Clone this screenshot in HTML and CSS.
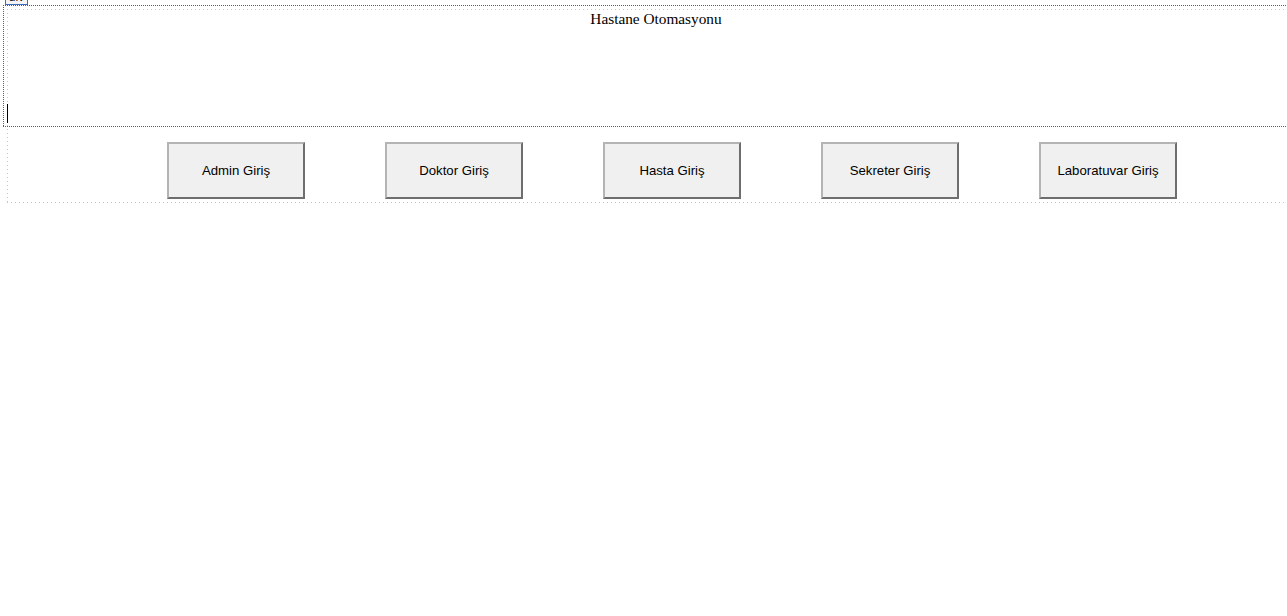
FILE: index.html
```html
<!DOCTYPE html>
<html>
<head>
<meta charset="utf-8">
<link rel="stylesheet" href="styles.css">
</head>
<body>
<div class="design">
  <div class="tag">div</div>
  <div class="selection"></div>
  <div class="panel">
    <div class="title-block">
      <span class="title">Hastane Otomasyonu</span>
      <span class="caret"></span>
    </div>
    <div class="buttons">
      <button class="btn">Admin Giriş</button>
      <button class="btn">Doktor Giriş</button>
      <button class="btn">Hasta Giriş</button>
      <button class="btn">Sekreter Giriş</button>
      <button class="btn">Laboratuvar Giriş</button>
    </div>
  </div>
</div>
</body>
</html>
```

FILE: styles.css
```css
html, body {
  margin: 0;
  padding: 0;
  background: #ffffff;
  overflow: hidden;
}

.design {
  position: relative;
  width: 1287px;
  height: 616px;
  padding: 9px 0 0 7px;
  box-sizing: border-box;
}

.tag {
  position: absolute;
  left: 5px;
  top: -11px;
  width: 23px;
  height: 16px;
  box-sizing: border-box;
  border: 1px solid #3d6bc0;
  background: #f4f4f4;
  font-family: "Liberation Sans", Arial, sans-serif;
  font-size: 12px;
  line-height: 14px;
  text-align: center;
  color: #1a1a1a;
}

.selection {
  position: absolute;
  left: 3px;
  top: 5px;
  width: 1320px;
  height: 122px;
  pointer-events: none;
  background-image:
    repeating-linear-gradient(to right, #2d5fc0 0 1px, transparent 1px 2px),
    repeating-linear-gradient(to bottom, #2d5fc0 0 1px, transparent 1px 2px),
    repeating-linear-gradient(to right, #2d5fc0 0 1px, transparent 1px 2px);
  background-size: 100% 1px, 1px 100%, 100% 1px;
  background-position: 0 0, 0 0, 0 100%;
  background-repeat: no-repeat;
}

.panel {
  width: 1298px;
  background-image:
    repeating-linear-gradient(to right, #c4c4c4 0 1px, transparent 1px 4px),
    repeating-linear-gradient(to bottom, #c4c4c4 0 1px, transparent 1px 4px),
    repeating-linear-gradient(to right, #c4c4c4 0 1px, transparent 1px 4px);
  background-size: 100% 1px, 1px 100%, 100% 1px;
  background-position: 0 0, 0 0, 0 100%;
  background-repeat: no-repeat;
}

.title-block {
  position: relative;
  height: 117px;
  text-align: center;
  padding-top: 1px;
  box-sizing: border-box;
}

.title {
  font-family: "Liberation Serif", "Times New Roman", serif;
  font-size: 15.3px;
  line-height: 17px;
  color: #000000;
}

.caret {
  position: absolute;
  left: 0;
  top: 95px;
  width: 1px;
  height: 19px;
  background: #000000;
}

.buttons {
  display: flex;
  gap: 80px;
  padding: 16px 0 4px 160px;
}

.btn {
  width: 138px;
  height: 57px;
  box-sizing: border-box;
  margin: 0;
  padding: 0;
  background: #f0f0f0;
  border-style: solid;
  border-width: 2px;
  border-color: #b4b4b4 #6e6e6e #6e6e6e #b4b4b4;
  font-family: "Liberation Sans", Arial, sans-serif;
  font-size: 13.2px;
  color: #000000;
}
```
